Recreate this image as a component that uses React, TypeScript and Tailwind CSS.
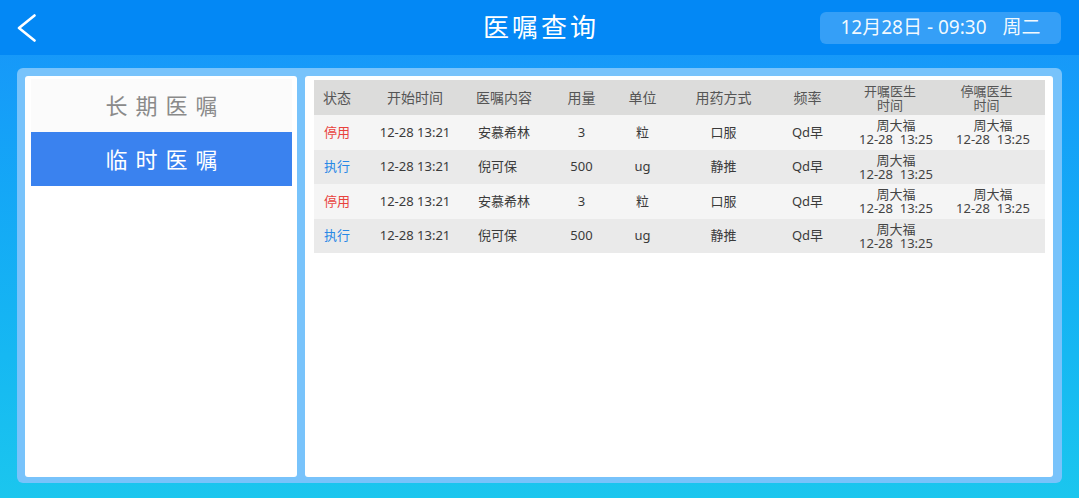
const font = { fontFamily: '"Noto Sans", "Noto Sans CJK SC", sans-serif' };

interface Order {
  status: '停用' | '执行';
  start: string;
  content: string;
  dose: string;
  unit: string;
  route: string;
  freq: string;
  openDoc: string;
  stopDoc?: string;
}

const orders: Order[] = [
  { status: '停用', start: '12-28 13:21', content: '安慕希林', dose: '3', unit: '粒', route: '口服', freq: 'Qd早', openDoc: '周大福', stopDoc: '周大福' },
  { status: '执行', start: '12-28 13:21', content: '倪可保', dose: '500', unit: 'ug', route: '静推', freq: 'Qd早', openDoc: '周大福' },
  { status: '停用', start: '12-28 13:21', content: '安慕希林', dose: '3', unit: '粒', route: '口服', freq: 'Qd早', openDoc: '周大福', stopDoc: '周大福' },
  { status: '执行', start: '12-28 13:21', content: '倪可保', dose: '500', unit: 'ug', route: '静推', freq: 'Qd早', openDoc: '周大福' },
];

const cols = 'grid grid-cols-[46px_110px_75px_73px_49px_113px_55px_118px_92px]';

function DoctorCell({ name, className }: { name?: string; className?: string }) {
  if (!name) return <div />;
  return (
    <div className={'flex flex-col items-center justify-center text-[13px] leading-[14px] text-[#444] ' + (className ?? '')}>
      <span>{name}</span>
      <span className="whitespace-pre">12-28  13:25</span>
    </div>
  );
}

export default function App() {
  return (
    <div className="flex h-[498px] w-full flex-col overflow-hidden bg-gradient-to-b from-[#1893fa] to-[#1bc6ee]" style={font}>
      {/* Header */}
      <header className="grid h-[55px] shrink-0 grid-cols-[1fr_auto_1fr] items-center bg-[#0388f5] text-white">
        <div className="flex items-center pl-[16px]">
          <svg width="22" height="28" viewBox="0 0 22 28" fill="none">
            <polyline points="18.5,1.5 3,14 18.5,26.5" stroke="white" strokeWidth="2.6" strokeLinecap="round" strokeLinejoin="round" />
          </svg>
        </div>
        <h1 className="pl-[3px] text-[26px] tracking-[3px]">医嘱查询</h1>
        <div className="flex justify-end pr-[18px]">
          <div className="flex h-[32px] w-[241px] items-center justify-center rounded-[6px] bg-white/20 text-[19px] text-white/95">
            <span>12月28日 - 09:30</span>
            <span className="ml-[16px]">周二</span>
          </div>
        </div>
      </header>

      {/* Body */}
      <div className="flex-1 px-[17px] pb-[15px] pt-[13px]">
        <div className="flex h-full gap-[8px] rounded-[6px] bg-[#78c3fb] pb-[6px] pl-[8px] pr-[9px] pt-[8px]">
          {/* Tabs */}
          <aside className="flex w-[272px] shrink-0 flex-col rounded-[3px] bg-white pl-[6px] pr-[5px] pt-[3px]">
            <div className="flex h-[53px] items-center justify-center bg-[#fbfbfb] pl-[8px] text-[22px] tracking-[8px] text-[#8a8a8a]">
              长期医嘱
            </div>
            <div className="flex h-[54px] items-center justify-center bg-[#3a82ef] pl-[8px] text-[22px] tracking-[8px] text-white">
              临时医嘱
            </div>
          </aside>

          {/* Table */}
          <section className="flex-1 rounded-[3px] bg-white pl-[9px] pr-[8px] pt-[4px]">
            <div className={cols + ' h-[35px] items-center bg-[#dcdcdb] text-center text-[14px] text-[#555]'}>
              <div>状态</div>
              <div>开始时间</div>
              <div className="pl-[6px] text-left">医嘱内容</div>
              <div>用量</div>
              <div>单位</div>
              <div>用药方式</div>
              <div>频率</div>
              <div className="flex flex-col items-center pr-[8px] text-[13px] leading-[14px]">
                <span>开嘱医生</span>
                <span>时间</span>
              </div>
              <div className="flex flex-col items-center pr-[25px] text-[13px] leading-[14px]">
                <span>停嘱医生</span>
                <span>时间</span>
              </div>
            </div>
            {orders.map((o, i) => (
              <div
                key={i}
                className={cols + ' h-[34.5px] items-center text-center text-[13px] text-[#3a3a3a] ' + (i % 2 === 0 ? 'bg-[#f5f5f5]' : 'bg-[#eaeaea]')}
              >
                <div className={o.status === '停用' ? 'text-[#e8423d]' : 'text-[#2787e6]'}>{o.status}</div>
                <div>{o.start}</div>
                <div className="pl-[8px] text-left">{o.content}</div>
                <div>{o.dose}</div>
                <div>{o.unit}</div>
                <div>{o.route}</div>
                <div>{o.freq}</div>
                <DoctorCell name={o.openDoc} className="pl-[4px]" />
                <DoctorCell name={o.stopDoc} className="pr-[12px]" />
              </div>
            ))}
          </section>
        </div>
      </div>
    </div>
  );
}
